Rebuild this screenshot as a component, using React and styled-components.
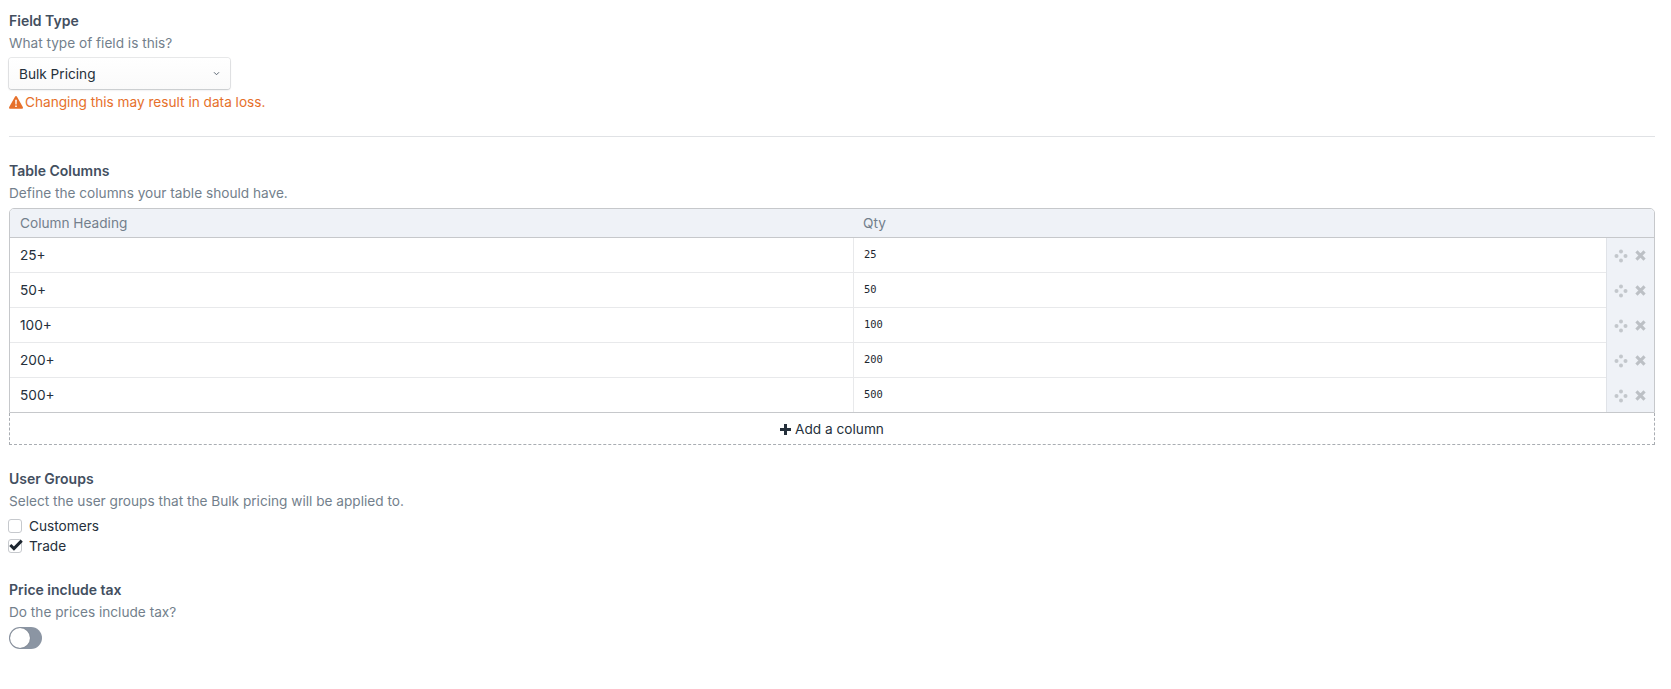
import React from 'react';
import styled, { createGlobalStyle } from 'styled-components';

const GlobalStyle = createGlobalStyle`
  html, body {
    margin: 0;
    padding: 0;
    background: #fff;
    font-family: Inter, "Liberation Sans", sans-serif;
    font-size: 13.65px;
    color: #25303b;
    -webkit-font-smoothing: antialiased;
  }
  * { box-sizing: border-box; }
`;

const Page = styled.div`
  padding: 12px 16px 0 9px;
`;

const Field = styled.div`
  margin-bottom: ${p => p.$gap || 0}px;
`;

const Label = styled.div`
  font-size: 14px;
  line-height: 18px;
  font-weight: 600;
  color: #434f5f;
`;

const Help = styled.div`
  line-height: 22px;
  margin-top: 2px;
  color: #737f8c;
`;

const SelectBox = styled.div`
  width: 221px;
  height: 31px;
  margin-top: 4px;
  padding: 0 10px;
  display: flex;
  align-items: center;
  justify-content: space-between;
  background: linear-gradient(#fff, #fafafa);
  border-radius: 3px;
  box-shadow: 0 0 0 1px rgba(40, 50, 60, 0.1), 0 1px 2px rgba(40, 50, 60, 0.2);
  color: #25303b;
`;

const Warning = styled.div`
  display: flex;
  align-items: center;
  gap: 2px;
  margin-top: 3px;
  line-height: 20px;
  color: #e6702a;
`;

const Divider = styled.hr`
  border: 0;
  border-top: 1px solid #e0e2e5;
  margin: 24px 0 25px;
`;

const TableBox = styled.div`
  margin-top: 4px;
  border: 1px solid #c6c8cb;
  border-radius: 5px 5px 0 0;
  overflow: hidden;
`;

const HeadRow = styled.div`
  display: grid;
  grid-template-columns: 843px 1fr;
  height: 29px;
  background: #eff2f7;
  border-bottom: 1px solid #c6c8cb;
  color: #737f8c;
  line-height: 28px;
`;

const HeadCell = styled.div`
  padding-left: 10px;
`;

const Row = styled.div`
  display: grid;
  grid-template-columns: 844px 1fr 48px;
  height: 35px;
  &:not(:last-child) { border-bottom: 1px solid #e8e9eb; }
  &:last-child { height: 34px; }
`;

const NameCell = styled.div`
  padding-left: 10px;
  line-height: 35px;
  color: #25303b;
  border-right: 1px solid #e8e9eb;
`;

const QtyCell = styled.div`
  padding: 7px 0 0 10px;
  font-family: "DejaVu Sans Mono", "Liberation Mono", monospace;
  font-size: 10.4px;
  line-height: 18px;
  color: #1d2630;
`;

const Controls = styled.div`
  display: flex;
  align-items: center;
  gap: 7px;
  padding: 0 0 0 7px;
  background: #eff2f7;
  border-left: 1px solid #e0e3e8;
`;

const AddColumn = styled.div`
  height: 32px;
  display: flex;
  align-items: center;
  justify-content: center;
  gap: 4px;
  padding-top: 1px;
  border: 1px dashed #a9adb2;
  border-top: 0;
  color: #25303b;
`;

const CheckList = styled.div`
  margin-top: 4px;
  display: flex;
  flex-direction: column;
`;

const CheckRow = styled.div`
  display: flex;
  align-items: center;
  gap: 7px;
  height: 20px;
  color: #25303b;
`;

const CheckBox = styled.span`
  position: relative;
  width: 14px;
  height: 14px;
  margin-left: -1px;
  border: 1px solid #c6c9cd;
  border-radius: 3px;
  background: #fff;
`;

const CheckMark = styled.svg`
  position: absolute;
  left: -1px;
  top: -2px;
`;

const Toggle = styled.div`
  position: relative;
  width: 33px;
  height: 22px;
  margin-top: 4px;
  border-radius: 11px;
  background: #8b95a3;
`;

const Knob = styled.span`
  position: absolute;
  left: 1px;
  top: 1px;
  width: 20px;
  height: 20px;
  border-radius: 50%;
  background: #fff;
  box-shadow: 0 0 1px rgba(0, 0, 0, 0.4);
`;

const Chevron = () => (
  <svg width="7" height="5" viewBox="0 0 8 6" fill="none" stroke="#5a6572" strokeWidth="1.2">
    <path d="M1 1.5l3 3 3-3" />
  </svg>
);

const WarnIcon = () => (
  <svg width="14" height="13" viewBox="0 0 14 13">
    <path fill="#e6702a" d="M7 0c.4 0 .7.2.9.5l5.900 10.600c.4.7-.1 1.600-.9 1.600H1.100c-.8 0-1.300-.9-.9-1.600L6.100.5C6.300.2 6.600 0 7 0z" />
    <path fill="#fff" d="M6.200 3.800h1.600l-.2 4.700H6.400zM6.200 9.400h1.600v1.500H6.200z" />
  </svg>
);

const MoveIcon = () => (
  <svg width="14" height="14" viewBox="0 0 14 14" fill="#c3c7cc">
    <circle cx="7" cy="2.500" r="2" />
    <circle cx="2.500" cy="7" r="2" />
    <circle cx="11.500" cy="7" r="2" />
    <circle cx="7" cy="11.500" r="2" />
  </svg>
);

const RemoveIcon = () => (
  <svg width="11" height="11" viewBox="0 0 10 10" stroke="#bcc0c5" strokeWidth="2.800">
    <path d="M1.300 1.300l7.400 7.400M8.700 1.300L1.300 8.700" />
  </svg>
);

const PlusIcon = () => (
  <svg width="11" height="11" viewBox="0 0 11 11" fill="#25303b">
    <path d="M4 0h3v4h4v3H7v4H4V7H0V4h4z" />
  </svg>
);

const columns = [
  { heading: '25+', qty: '25' },
  { heading: '50+', qty: '50' },
  { heading: '100+', qty: '100' },
  { heading: '200+', qty: '200' },
  { heading: '500+', qty: '500' },
];

const App = () => (
  <Page>
    <GlobalStyle />
    <Field>
      <Label>Field Type</Label>
      <Help>What type of field is this?</Help>
      <SelectBox>
        Bulk Pricing
        <Chevron />
      </SelectBox>
      <Warning>
        <WarnIcon />
        Changing this may result in data loss.
      </Warning>
    </Field>

    <Divider />

    <Field $gap={25}>
      <Label>Table Columns</Label>
      <Help>Define the columns your table should have.</Help>
      <TableBox>
        <HeadRow>
          <HeadCell>Column Heading</HeadCell>
          <HeadCell>Qty</HeadCell>
        </HeadRow>
        {columns.map(col => (
          <Row key={col.qty}>
            <NameCell>{col.heading}</NameCell>
            <QtyCell>{col.qty}</QtyCell>
            <Controls>
              <MoveIcon />
              <RemoveIcon />
            </Controls>
          </Row>
        ))}
      </TableBox>
      <AddColumn>
        <PlusIcon />
        Add a column
      </AddColumn>
    </Field>

    <Field $gap={25}>
      <Label>User Groups</Label>
      <Help>Select the user groups that the Bulk pricing will be applied to.</Help>
      <CheckList>
        <CheckRow>
          <CheckBox />
          Customers
        </CheckRow>
        <CheckRow>
          <CheckBox>
            <CheckMark width="16" height="14" viewBox="0 0 14 12" fill="none" stroke="#1d2630" strokeWidth="2.600">
              <path d="M2 6l3.200 3.200L12 2.200" />
            </CheckMark>
          </CheckBox>
          Trade
        </CheckRow>
      </CheckList>
    </Field>

    <Field>
      <Label>Price include tax</Label>
      <Help>Do the prices include tax?</Help>
      <Toggle>
        <Knob />
      </Toggle>
    </Field>
  </Page>
);

export default App;
